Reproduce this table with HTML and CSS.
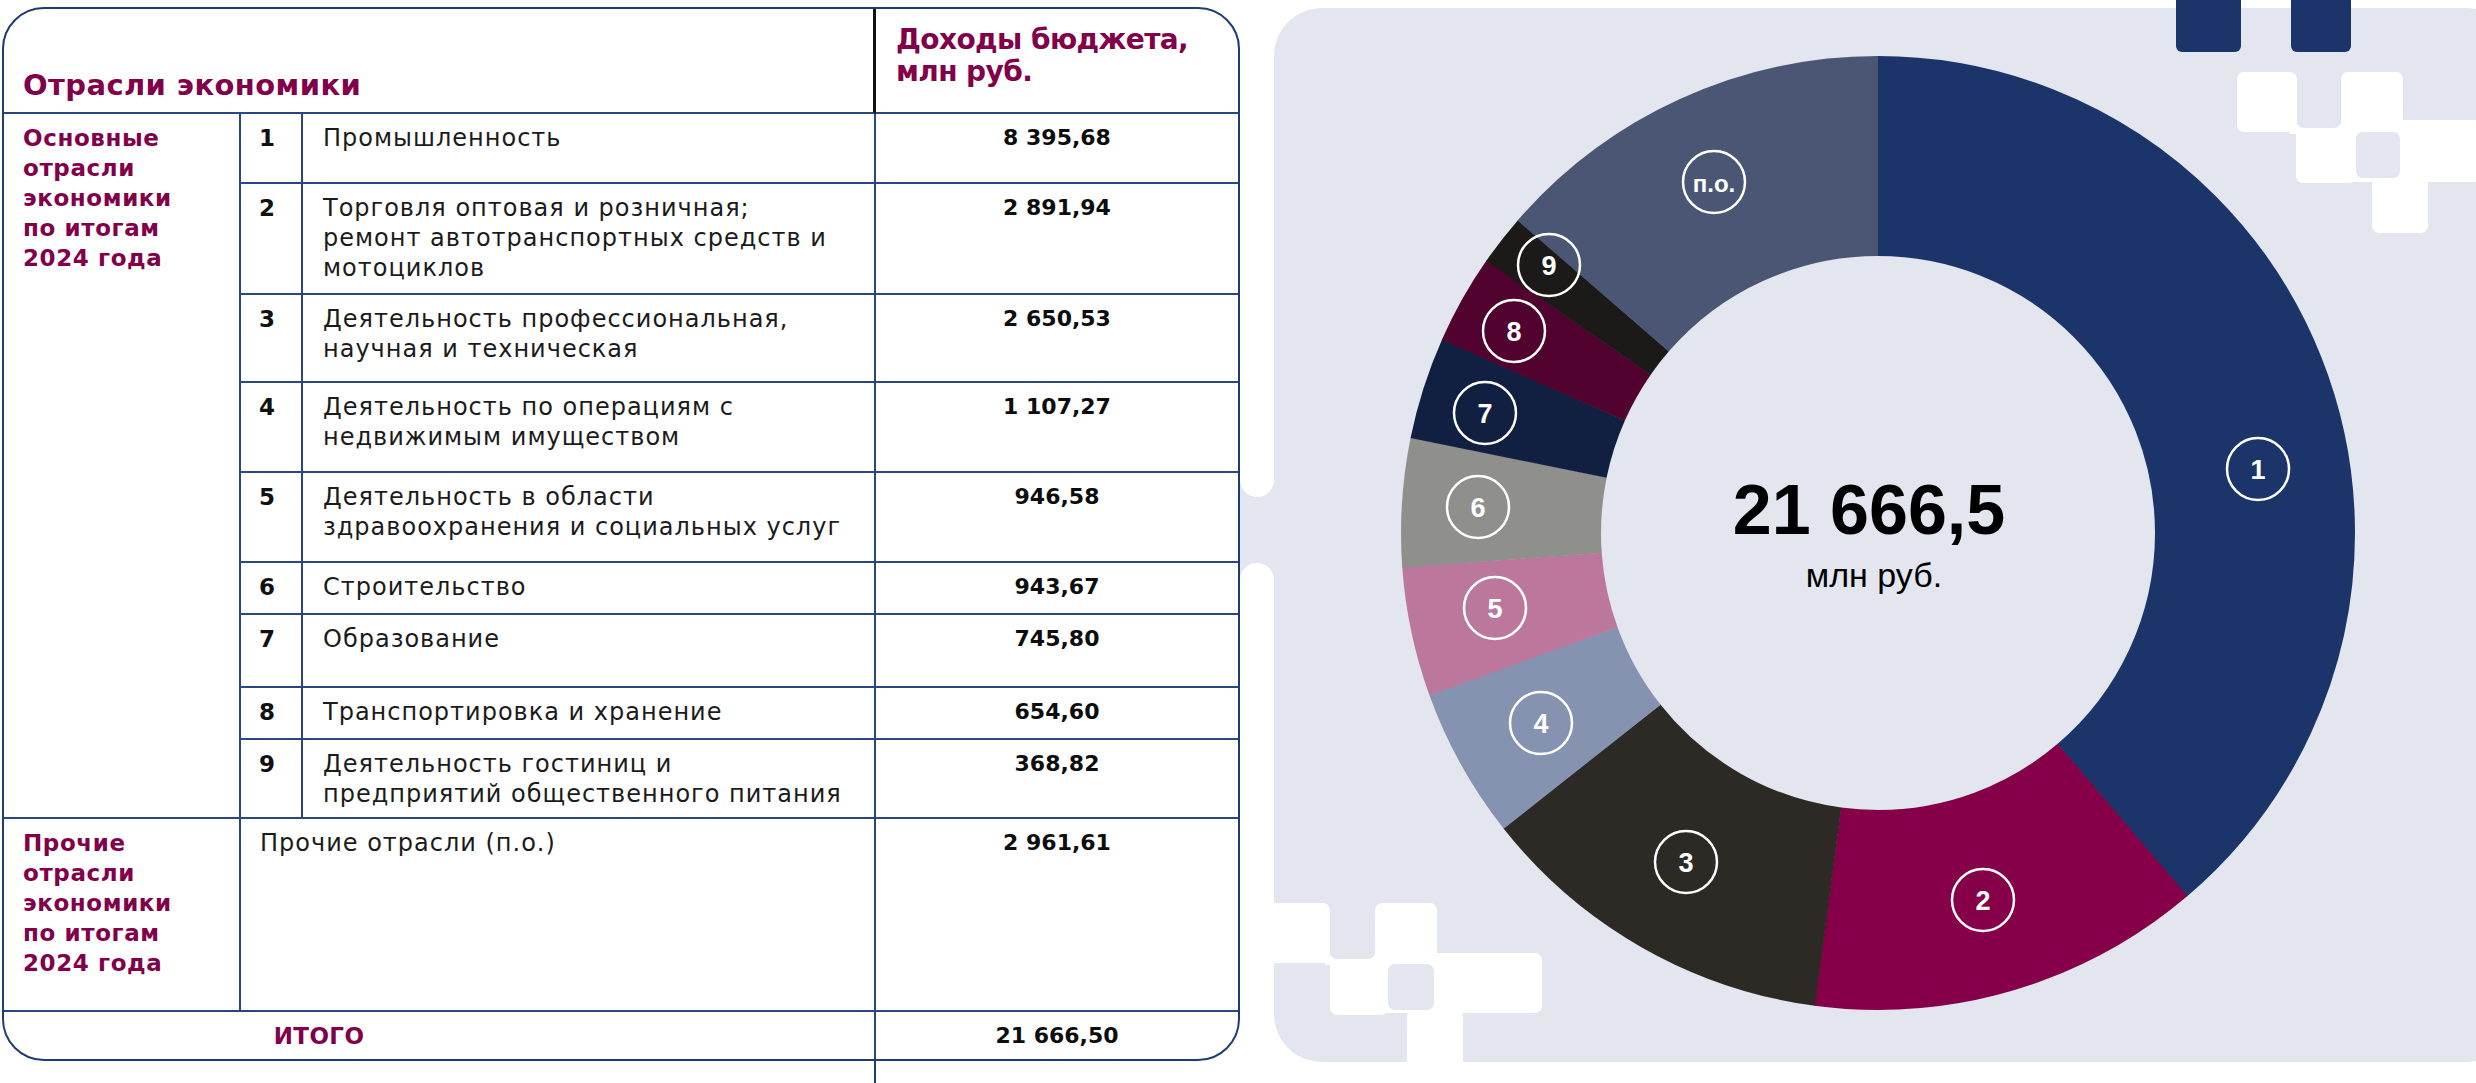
FILE: index.html
```html
<!DOCTYPE html>
<html lang="ru">
<head>
<meta charset="utf-8">
<title>Доходы бюджета по отраслям</title>
<link rel="stylesheet" href="styles.css">
</head>
<body>
<div class="page">
  <div class="left">
    <div class="tbl">
      <div class="c h-left">Отрасли экономики</div>
      <div class="c h-right last-col">Доходы бюджета,<br>млн руб.</div>

      <div class="c grp grp-main">Основные<br>отрасли<br>экономики<br>по итогам<br>2024 года</div>

      <div class="c num">1</div><div class="c desc">Промышленность</div><div class="c val last-col">8 395,68</div>
      <div class="c num">2</div><div class="c desc">Торговля оптовая и розничная;<br>ремонт автотранспортных средств и<br>мотоциклов</div><div class="c val last-col">2 891,94</div>
      <div class="c num">3</div><div class="c desc">Деятельность профессиональная,<br>научная и техническая</div><div class="c val last-col">2 650,53</div>
      <div class="c num">4</div><div class="c desc">Деятельность по операциям с<br>недвижимым имуществом</div><div class="c val last-col">1 107,27</div>
      <div class="c num">5</div><div class="c desc">Деятельность в области<br>здравоохранения и социальных услуг</div><div class="c val last-col">946,58</div>
      <div class="c num">6</div><div class="c desc">Строительство</div><div class="c val last-col">943,67</div>
      <div class="c num">7</div><div class="c desc">Образование</div><div class="c val last-col">745,80</div>
      <div class="c num">8</div><div class="c desc">Транспортировка и хранение</div><div class="c val last-col">654,60</div>
      <div class="c num">9</div><div class="c desc">Деятельность гостиниц и<br>предприятий общественного питания</div><div class="c val last-col">368,82</div>

      <div class="c grp">Прочие<br>отрасли<br>экономики<br>по итогам<br>2024 года</div>
      <div class="c desc other">Прочие отрасли (п.о.)</div>
      <div class="c val last-col">2 961,61</div>

      <div class="c total last-row">ИТОГО</div>
      <div class="c val last-col last-row">21 666,50</div>
    </div>
    <div class="tail"></div>
  </div>

  <div class="panel">
    <svg class="chart" width="1236" height="1083" viewBox="1240 0 1236 1083" xmlns="http://www.w3.org/2000/svg">
      <!-- background panel -->
      <rect class="bg" x="1274" y="8" width="1240" height="1054" rx="48"/>
      <rect class="bg" x="1240" y="440" width="40" height="180"/>
      <rect class="wh" x="1240" y="380" width="34" height="117" rx="17"/>
      <rect class="wh" x="1240" y="563" width="34" height="140" rx="17"/>

      <!-- top-right decoration -->
      <rect class="wh" x="2237" y="72" width="60" height="60" rx="7"/>
      <rect class="wh" x="2341" y="72" width="62" height="60" rx="7"/>
      <rect class="wh" x="2290" y="124" width="60" height="10"/>
      <rect class="wh" x="2341" y="120" width="140" height="62" rx="7"/>
      <rect class="wh" x="2296" y="128" width="60" height="55" rx="7"/>
      <rect class="wh" x="2372" y="178" width="56" height="55" rx="7"/>
      <rect class="bg" x="2297" y="60" width="44" height="68" rx="7"/>
      <rect class="bg" x="2356" y="132" width="44" height="46" rx="7"/>
      <rect class="navy" x="2176" y="-10" width="65" height="62" rx="6"/>
      <rect class="navy" x="2291" y="-10" width="60" height="62" rx="6"/>

      <!-- bottom-left decoration -->
      <rect class="wh" x="1230" y="903" width="100" height="60" rx="7"/>
      <rect class="wh" x="1375" y="903" width="62" height="62" rx="7"/>
      <rect class="wh" x="1375" y="953" width="167" height="60" rx="7"/>
      <rect class="wh" x="1330" y="959" width="58" height="56" rx="7"/>
      <rect class="wh" x="1325" y="955" width="55" height="10"/>
      <rect class="wh" x="1407" y="1010" width="56" height="90" rx="7"/>
      <rect class="bg" x="1330" y="880" width="45" height="79" rx="7"/>
      <rect class="bg" x="1388" y="964" width="46" height="46" rx="7"/>

      <!-- donut -->
      <g transform="rotate(-90 1878 533)">
        <circle class="seg s1" cx="1878" cy="533" r="377" stroke-dasharray="918.4 2400" stroke-dashoffset="0"/>
        <circle class="seg s2" cx="1878" cy="533" r="377" stroke-dasharray="316.7 2400" stroke-dashoffset="-917.88"/>
        <circle class="seg s3" cx="1878" cy="533" r="377" stroke-dasharray="290.3 2400" stroke-dashoffset="-1234.05"/>
        <circle class="seg s4" cx="1878" cy="533" r="377" stroke-dasharray="121.6 2400" stroke-dashoffset="-1523.83"/>
        <circle class="seg s5" cx="1878" cy="533" r="377" stroke-dasharray="104.0 2400" stroke-dashoffset="-1644.89"/>
        <circle class="seg s6" cx="1878" cy="533" r="377" stroke-dasharray="103.7 2400" stroke-dashoffset="-1748.38"/>
        <circle class="seg s7" cx="1878" cy="533" r="377" stroke-dasharray="82.1 2400" stroke-dashoffset="-1851.55"/>
        <circle class="seg s8" cx="1878" cy="533" r="377" stroke-dasharray="72.1 2400" stroke-dashoffset="-1933.09"/>
        <circle class="seg s9" cx="1878" cy="533" r="377" stroke-dasharray="40.8 2400" stroke-dashoffset="-2004.66"/>
        <circle class="seg s10" cx="1878" cy="533" r="377" stroke-dasharray="324.3 2400" stroke-dashoffset="-2044.98"/>
      </g>

      <!-- labels -->
      <g class="labels">
        <circle cx="2258" cy="469" r="31"/><text x="2258" y="470">1</text>
        <circle cx="1983" cy="900" r="31"/><text x="1983" y="901">2</text>
        <circle cx="1686" cy="862" r="31"/><text x="1686" y="863">3</text>
        <circle cx="1541" cy="723" r="31"/><text x="1541" y="724">4</text>
        <circle cx="1495" cy="608" r="31"/><text x="1495" y="609">5</text>
        <circle cx="1478" cy="507" r="31"/><text x="1478" y="508">6</text>
        <circle cx="1485" cy="413" r="31"/><text x="1485" y="414">7</text>
        <circle cx="1514" cy="331" r="31"/><text x="1514" y="332">8</text>
        <circle cx="1549" cy="265" r="31"/><text x="1549" y="266">9</text>
        <circle cx="1714" cy="182" r="31"/><text class="po" x="1714" y="183">п.о.</text>
      </g>

      <text class="total-num" x="1869" y="534">21 666,5</text>
      <text class="total-unit" x="1874" y="587">млн руб.</text>
    </svg>
  </div>
</div>
</body>
</html>
```

FILE: styles.css
```css
* { box-sizing: border-box; }

body {
  margin: 0;
  background: #ffffff;
}

.page {
  display: flex;
  width: 2476px;
  height: 1083px;
  overflow: hidden;
}

.left {
  display: flex;
  flex-direction: column;
  width: 1240px;
  flex: none;
  padding: 7px 0 0 2px;
}

.tbl {
  width: 1238px;
  height: 1056px;
  border: 2px solid #1f3b74;
  border-radius: 42px;
  overflow: hidden;
  display: grid;
  grid-template-columns: 237px 62px 573px 362px;
  grid-template-rows: 105px 70px 111px 88px 90px 90px 52px 73px 52px 79px 193px 49px;
  font-family: "DejaVu Sans", sans-serif;
  background: #ffffff;
}

.tail {
  width: 2px;
  height: 22px;
  margin-left: 872px;
  background: #1f3b74;
}

.c {
  border-right: 2px solid #2a4680;
  border-bottom: 2px solid #2a4680;
  padding: 9px 18px 0;
  font-size: 24px;
  line-height: 30px;
  color: #1b1b1b;
  white-space: nowrap;
  letter-spacing: 1px;
}

.last-col { border-right: none; }
.last-row { border-bottom: none; }

.h-left {
  grid-column: 1 / 4;
  display: flex;
  align-items: flex-end;
  padding: 0 18px 11px 19px;
  border-right: 3px solid #111111;
  font-size: 29px;
  line-height: 32px;
  font-weight: 700;
  color: #82004a;
  letter-spacing: 0.4px;
}

.h-right {
  padding: 15px 10px 0 20px;
  font-size: 28px;
  line-height: 32px;
  font-weight: 700;
  color: #82004a;
  letter-spacing: -0.6px;
}

.grp {
  grid-column: 1;
  font-size: 23px;
  font-weight: 700;
  color: #82004a;
  padding-left: 19px;
  letter-spacing: 0.6px;
}

.grp-main {
  grid-row: 2 / span 9;
}

.num {
  font-size: 23px;
  font-weight: 700;
  color: #111111;
  padding-left: 18px;
  letter-spacing: 0;
}

.desc {
  padding-left: 20px;
}

.other {
  grid-column: 2 / 4;
  padding-left: 19px;
}

.val {
  text-align: center;
  font-weight: 700;
  font-size: 22px;
  color: #0d0d0d;
  letter-spacing: 0;
}

.total {
  grid-column: 1 / 4;
  text-align: center;
  padding-right: 258px;
  font-size: 23px;
  font-weight: 700;
  color: #82004a;
  letter-spacing: 0.4px;
}

.panel {
  flex: none;
  width: 1236px;
  height: 1083px;
}

.chart {
  display: block;
}

.bg { fill: #e3e6ee; }
.wh { fill: #ffffff; }
.navy { fill: #1b3469; }

.seg {
  fill: none;
  stroke-width: 200;
}
.s1 { stroke: #1b3469; }
.s2 { stroke: #850048; }
.s3 { stroke: #2d2a26; }
.s4 { stroke: #8593b0; }
.s5 { stroke: #bc789c; }
.s6 { stroke: #8f8f8b; }
.s7 { stroke: #111f41; }
.s8 { stroke: #51022e; }
.s9 { stroke: #1b1a18; }
.s10 { stroke: #4a5673; }

.labels circle {
  fill: none;
  stroke: #ffffff;
  stroke-width: 2.5;
}

.labels text {
  fill: #ffffff;
  font-family: "Liberation Sans", Arial, sans-serif;
  font-weight: 700;
  font-size: 27px;
  text-anchor: middle;
  dominant-baseline: central;
}

.labels .po {
  font-size: 24px;
}

.total-num {
  font-family: "Liberation Sans", Arial, sans-serif;
  font-weight: 700;
  font-size: 70px;
  text-anchor: middle;
  fill: #000000;
}

.total-unit {
  font-family: "Liberation Sans", Arial, sans-serif;
  font-size: 34px;
  text-anchor: middle;
  fill: #000000;
}
```
